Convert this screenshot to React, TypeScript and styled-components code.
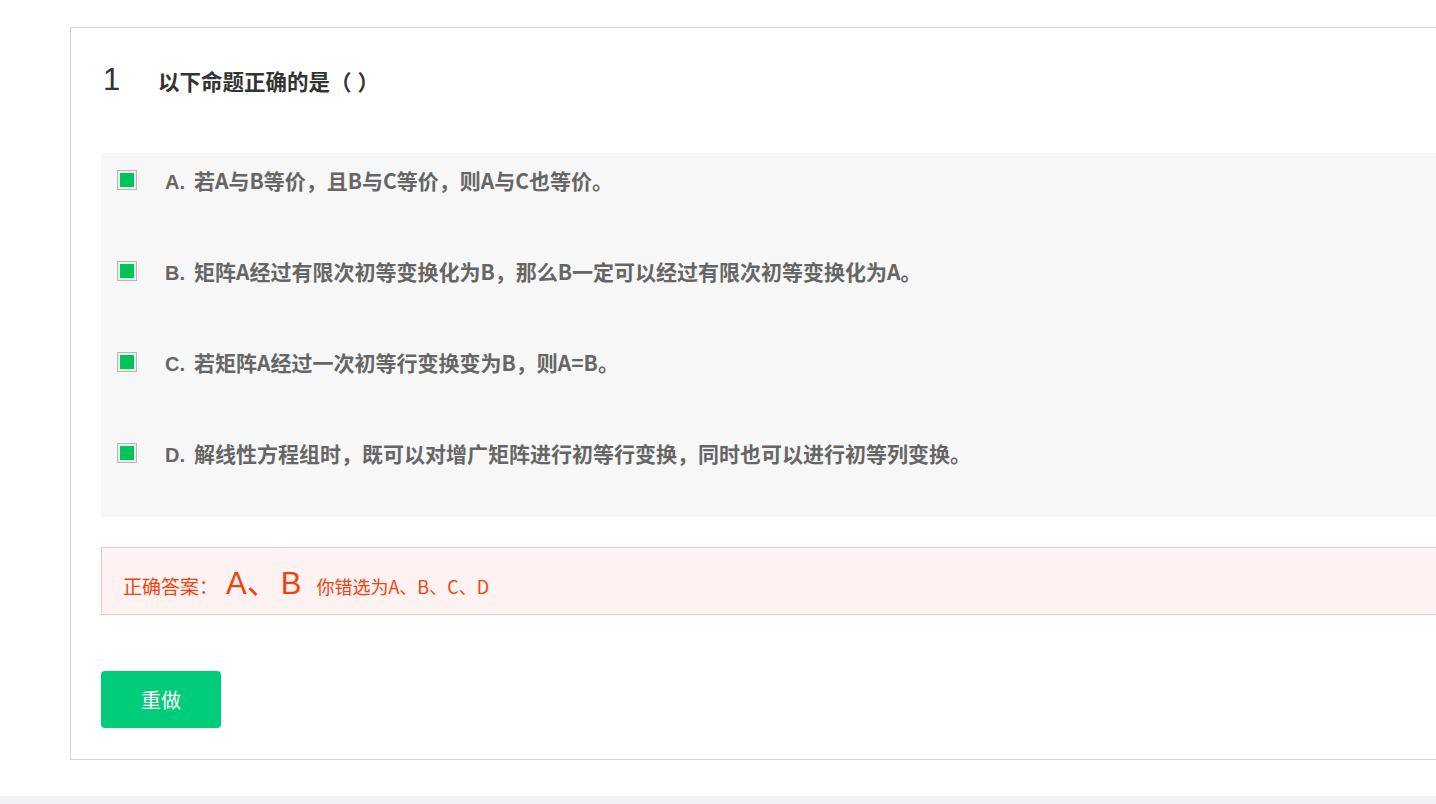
import React from "react";
import styled, { createGlobalStyle } from "styled-components";

type Option = {
  key: string;
  text: string;
};

const options: Option[] = [
  { key: "A", text: "若A与B等价，且B与C等价，则A与C也等价。" },
  { key: "B", text: "矩阵A经过有限次初等变换化为B，那么B一定可以经过有限次初等变换化为A。" },
  { key: "C", text: "若矩阵A经过一次初等行变换变为B，则A=B。" },
  { key: "D", text: "解线性方程组时，既可以对增广矩阵进行初等行变换，同时也可以进行初等列变换。" },
];

const GlobalStyle = createGlobalStyle`
  html, body {
    margin: 0;
    padding: 0;
    overflow: hidden;
    background: #f0f1f5;
    font-family: "Microsoft YaHei", "Noto Sans CJK SC", "Liberation Sans", sans-serif;
  }
`;

const Page = styled.div`
  background: #fff;
  height: 796px;
  padding: 27px 0 0 70px;
  box-sizing: border-box;
`;

const Card = styled.div`
  width: 1420px;
  height: 733px;
  box-sizing: border-box;
  border: 1px solid #d3d3d3;
  padding: 0 0 0 30px;
`;

const TitleRow = styled.div`
  display: flex;
  align-items: center;
  height: 104px;
`;

const Num = styled.span`
  width: 57px;
  padding-left: 2px;
  box-sizing: border-box;
  font-size: 31px;
  font-weight: 300;
  color: #333;
  font-family: "Liberation Sans", "Noto Sans CJK SC", sans-serif;
`;

const Title = styled.span`
  font-size: 21.5px;
  font-weight: 700;
  color: #333;
  display: flex;
  white-space: nowrap;
`;

const Blank = styled.span`
  width: 6px;
`;

const OptionList = styled.div`
  margin-top: 21px;
  background: #f7f7f7;
`;

const OptionRow = styled.div`
  display: flex;
  align-items: flex-start;
  height: 91px;
  box-sizing: border-box;
  padding: 17px 0 0 16px;
`;

const Check = styled.span<{ $checked?: boolean }>`
  width: 20px;
  height: 20px;
  box-sizing: border-box;
  border: 1px solid #b8b8b8;
  padding: 2px;
  background: #ececec;
  display: flex;
  flex-shrink: 0;

  &::after {
    content: "";
    flex: 1;
    background: ${(p) => (p.$checked ? "#00c35a" : "#fff")};
  }
`;

const OptionLabel = styled.span`
  margin-left: 28px;
  margin-top: -1px;
  line-height: 22px;
  font-size: 21px;
  font-weight: 700;
  color: #666;
  display: flex;
  align-items: baseline;
  white-space: nowrap;
`;

const OptionKey = styled.span`
  font-family: "Liberation Sans", sans-serif;
  font-size: 20px;
  width: 29px;
`;

const AnswerBox = styled.div`
  margin-top: 30px;
  height: 68px;
  box-sizing: border-box;
  border: 1px solid #f2c4c4;
  background: #fff2f2;
  display: flex;
  align-items: baseline;
  padding: 10px 0 0 21px;
  color: #f2430c;
`;

const AnswerLabel = styled.span`
  font-size: 19px;
`;

const AnswerValue = styled.span`
  font-family: "Liberation Sans", "Noto Sans CJK SC", sans-serif;
  font-size: 31px;
  margin-left: 8px;
`;

const AnswerSecond = styled.span`
  margin-left: 3px;
`;

const WrongPick = styled.span`
  font-size: 18px;
  margin-left: 15px;
`;

const RedoButton = styled.button`
  margin-top: 56px;
  width: 120px;
  height: 57px;
  border: none;
  border-radius: 4px;
  background: #00cc7a;
  color: #fff;
  font-size: 20px;
  font-family: "Microsoft YaHei", "Noto Sans CJK SC", sans-serif;
  cursor: pointer;
`;

export default function App() {
  return (
    <>
      <GlobalStyle />
      <Page>
        <Card>
          <TitleRow>
            <Num>1</Num>
            <Title>
              以下命题正确的是（<Blank />）
            </Title>
          </TitleRow>
          <OptionList>
            {options.map((o) => (
              <OptionRow key={o.key}>
                <Check $checked />
                <OptionLabel>
                  <OptionKey>{o.key}.</OptionKey>
                  {o.text}
                </OptionLabel>
              </OptionRow>
            ))}
          </OptionList>
          <AnswerBox>
            <AnswerLabel>正确答案：</AnswerLabel>
            <AnswerValue>
              A、<AnswerSecond>B</AnswerSecond>
            </AnswerValue>
            <WrongPick>你错选为A、B、C、D</WrongPick>
          </AnswerBox>
          <RedoButton>重做</RedoButton>
        </Card>
      </Page>
    </>
  );
}
